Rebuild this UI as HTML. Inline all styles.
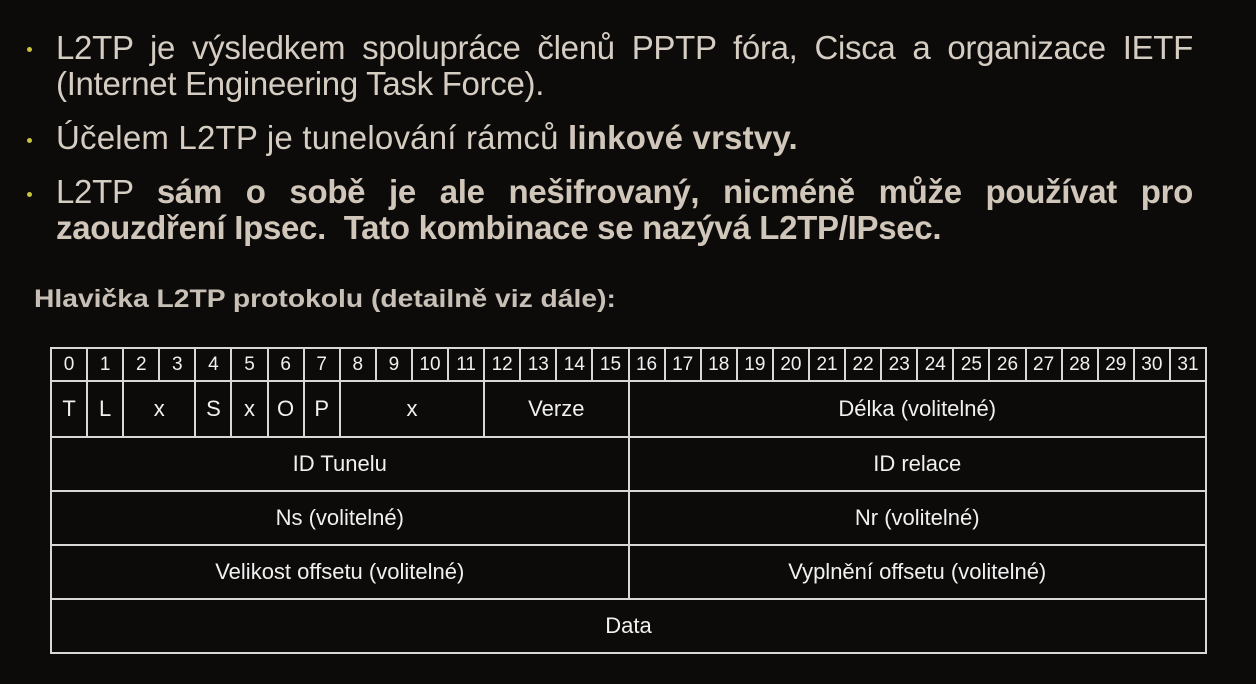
<!DOCTYPE html>
<html><head><meta charset="utf-8"><style>
html,body{margin:0;padding:0;background:#0c0b0a;width:1256px;height:684px;overflow:hidden}
.txt{position:absolute;left:56px;top:30px;width:1137px;font-family:"Liberation Sans",sans-serif;font-size:33px;line-height:36px;color:#d6cdc2;letter-spacing:-0.3px}
.l{white-space:nowrap;height:36px}
.l.j{text-align:justify;text-align-last:justify;white-space:normal}
.gap{height:18px}
b{color:#d0c6ba}
.bul{position:absolute;left:27px;width:5px;height:5px;border-radius:50%;background:#c9c23a}
h2{position:absolute;left:34px;top:285px;margin:0;font-family:"Liberation Sans",sans-serif;font-weight:bold;font-size:25px;color:#c8c0b6;transform:scaleX(1.13);transform-origin:0 0;white-space:nowrap}
table{position:absolute;left:50px;top:347px;width:1157px;border-collapse:collapse;table-layout:fixed;font-family:"Liberation Sans",sans-serif;color:#f0f0f0;font-size:22px}
td{border:2px solid #d8d8d8;text-align:center;padding:0;height:52px}
tr.n td{height:31px;font-size:19px}
tr.r2 td{height:54px}
</style></head><body>
<div class="bul" style="top:47px"></div>
<div class="bul" style="top:138px"></div>
<div class="bul" style="top:192px"></div>
<div class="txt">
<div class="l j">L2TP je výsledkem spolupráce členů PPTP fóra, Cisca a organizace IETF</div>
<div class="l">(Internet Engineering Task Force).</div>
<div class="gap"></div>
<div class="l" style="letter-spacing:0.2px">Účelem L2TP je tunelování rámců <b>linkové vrstvy.</b></div>
<div class="gap"></div>
<div class="l j">L2TP <b>sám o sobě je ale nešifrovaný, nicméně může používat pro</b></div>
<div class="l"><b>zaouzdření Ipsec.&nbsp; Tato kombinace se nazývá L2TP/IPsec.</b></div>
</div>
<h2>Hlavička L2TP protokolu (detailně viz dále):</h2>
<table>
<tr class="n"><td>0</td><td>1</td><td>2</td><td>3</td><td>4</td><td>5</td><td>6</td><td>7</td><td>8</td><td>9</td><td>10</td><td>11</td><td>12</td><td>13</td><td>14</td><td>15</td><td>16</td><td>17</td><td>18</td><td>19</td><td>20</td><td>21</td><td>22</td><td>23</td><td>24</td><td>25</td><td>26</td><td>27</td><td>28</td><td>29</td><td>30</td><td>31</td></tr>
<tr class="r2"><td>T</td><td>L</td><td colspan="2">x</td><td>S</td><td>x</td><td>O</td><td>P</td><td colspan="4">x</td><td colspan="4">Verze</td><td colspan="16">Délka (volitelné)</td></tr>
<tr><td colspan="16">ID Tunelu</td><td colspan="16">ID relace</td></tr>
<tr><td colspan="16">Ns (volitelné)</td><td colspan="16">Nr (volitelné)</td></tr>
<tr><td colspan="16">Velikost offsetu (volitelné)</td><td colspan="16">Vyplnění offsetu (volitelné)</td></tr>
<tr><td colspan="32">Data</td></tr>
</table>
</body></html>
